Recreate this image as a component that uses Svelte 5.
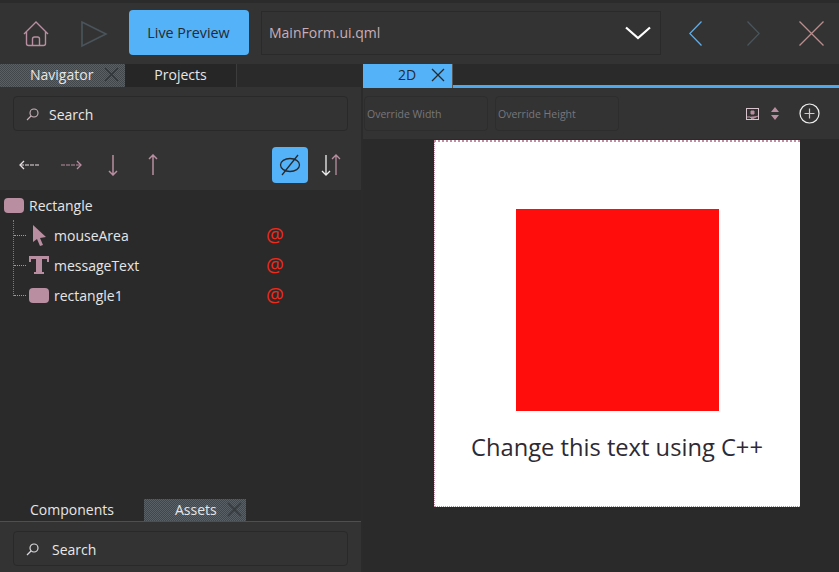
<script>
  const tree = [
    { name: 'mouseArea', icon: 'cursor' },
    { name: 'messageText', icon: 'text' },
    { name: 'rectangle1', icon: 'rect' }
  ];
</script>

<div class="app">
  <header class="toolbar">
    <svg class="home" width="28" height="28" viewBox="0 0 28 28" fill="none" stroke="#b98ea0" stroke-width="1.4">
      <path d="M2 14 14 2l12 12M4.500 12v11.500q0 2 2 2h15q2 0 2-2V12M10.500 25v-6q0-2 2-2h3q2 0 2 2v6" />
    </svg>
    <svg class="play" width="28" height="28" viewBox="0 0 28 28" fill="none" stroke="#4a555c" stroke-width="1.6">
      <path d="M2 2v24L26 14Z" />
    </svg>
    <button class="live">Live Preview</button>
    <div class="file">
      <span>MainForm.ui.qml</span>
      <svg width="26" height="14" viewBox="0 0 26 14" fill="none" stroke="#fff" stroke-width="2.200">
        <path d="M1 1.500 13 12 25 1.500" />
      </svg>
    </div>
    <svg class="nav first" width="13" height="25" viewBox="0 0 13 25" fill="none" stroke="#62aee8" stroke-width="1.300">
      <path d="M12.500 .5 .8 12.500l11.700 12" />
    </svg>
    <svg class="nav second" width="13" height="25" viewBox="0 0 13 25" fill="none" stroke="#4a555c" stroke-width="1.300">
      <path d="m.5 .5 11.700 12L.5 24.500" />
    </svg>
    <svg class="close" width="25" height="25" viewBox="0 0 25 25" fill="none" stroke="#b98e8e" stroke-width="1.300">
      <path d="m.5 .5 24 24M24.500 .5l-24 24" />
    </svg>
  </header>

  <div class="main">
    <aside class="left">
      <div class="tabs top-tabs">
        <div class="tab active nav-tab">
          <span>Navigator</span>
          <svg class="x" width="15" height="15" viewBox="0 0 15 15" stroke="#33383c" stroke-width="1.600"><path d="m1 1 13 13M14 1 1 14" /></svg>
        </div>
        <div class="tab projects"><span>Projects</span></div>
      </div>

      <div class="nav-panel">
        <div class="search">
          <svg width="13" height="13" viewBox="0 0 13 13" fill="none" stroke="#c9b4bd" stroke-width="1.100"><circle cx="8" cy="5" r="4" /><path d="M5 8 1 12" /></svg>
          <span>Search</span>
        </div>
        <div class="actions">
          <svg class="a1" width="21" height="10" viewBox="0 0 21 10" fill="none" stroke="#e8e0e4"><path d="M1 5h20" stroke-dasharray="4 1" /><path d="M5 1 1 5l4 4" stroke-width="1.300" /></svg>
          <svg class="a2" width="21" height="10" viewBox="0 0 21 10" fill="none" stroke="#b98ea0"><path d="M0 5h20" stroke-dasharray="4 1" /><path d="m16 1 4 4-4 4" stroke-width="1.300" /></svg>
          <svg class="a3" width="10" height="22" viewBox="0 0 10 22" fill="none" stroke="#b98ea0" stroke-width="1.500"><path d="M5 1v20M1 17l4 4 4-4" /></svg>
          <svg class="a4" width="10" height="22" viewBox="0 0 10 22" fill="none" stroke="#b98ea0" stroke-width="1.500"><path d="M5 21V1M1 5l4-4 4 4" /></svg>
          <div class="toggle">
            <svg width="24" height="24" viewBox="0 0 24 24" fill="none" stroke="#26292c" stroke-width="1.300"><ellipse cx="12" cy="12" rx="9.500" ry="6.500" /><path d="M4 22 20 2" /></svg>
          </div>
          <svg class="sort" width="20" height="22" viewBox="0 0 20 22" fill="none" stroke-width="1.300">
            <path stroke="#eee" d="M5 1v20M1 17l4 4 4-4" />
            <path stroke="#b98ea0" d="M15 21V1M11 5l4-4 4 4" />
          </svg>
        </div>
      </div>

      <div class="tree">
        <div class="root"><i class="swatch big"></i><span>Rectangle</span></div>
        <div class="children">
          {#each tree as item}
            <div class="row">
              <i class="dash"></i>
              <div class="icon">
                {#if item.icon === 'cursor'}
                  <svg width="15" height="21" viewBox="0 0 15 21" fill="#b98ea0"><path d="M1 0v17l4-3 3 7 3-1-3-7 6-1Z" /></svg>
                {:else if item.icon === 'text'}
                  <svg width="20" height="20" viewBox="0 0 20 20" fill="#b98ea0"><path d="M0 1h20v6h-2V4h-5v13h2v2H5v-2h2V4H2v3H0Z" /></svg>
                {:else}
                  <i class="swatch"></i>
                {/if}
              </div>
              <span class="name">{item.name}</span>
              <span class="at">@</span>
            </div>
          {/each}
        </div>
      </div>

      <div class="tabs bottom-tabs">
        <div class="tab components"><span>Components</span></div>
        <div class="tab active assets-tab">
          <span>Assets</span>
          <svg class="x" width="15" height="15" viewBox="0 0 15 15" stroke="#33383c" stroke-width="1.600"><path d="m1 1 13 13M14 1 1 14" /></svg>
        </div>
      </div>
      <div class="assets-panel">
        <div class="search">
          <svg width="13" height="13" viewBox="0 0 13 13" fill="none" stroke="#d8d8dc" stroke-width="1.200"><circle cx="8" cy="5" r="4" /><path d="M5 8 1 12" /></svg>
          <span>Search</span>
        </div>
      </div>
    </aside>

    <section class="right">
      <div class="doc-tabs">
        <div class="doc-tab">
          <span>2D</span>
          <svg width="14" height="14" viewBox="0 0 14 14" stroke="#26292c" stroke-width="1.300"><path d="m1 1 12 12M13 1 1 13" /></svg>
        </div>
      </div>
      <div class="doc-tools">
        <div class="override first-o">Override Width</div>
        <div class="override">Override Height</div>
        <svg class="snap" width="13" height="12" viewBox="0 0 13 12" fill="none" stroke="#d8c4cc"><rect x="0.500" y="0.500" width="12" height="11" /><path d="M1 9h3l2 2 6-3M5 3h3v3H5Z" fill="#b98ea0" stroke="#b98ea0" /></svg>
        <svg class="updown" width="8" height="13" viewBox="0 0 8 13" fill="#b98ea0"><path d="M4 0 8 5H0ZM0 8h8l-4 5Z" /></svg>
        <svg class="plus" width="21" height="21" viewBox="0 0 21 21" fill="none" stroke="#eee" stroke-width="1.200"><circle cx="10.500" cy="10.500" r="9.500" /><path stroke="#d8c4cc" d="M10.500 5.500v10M5.500 10.500h10" /></svg>
      </div>
      <div class="canvas">
        <div class="artboard">
          <div class="red"></div>
          <div class="message">Change this text using C++</div>
        </div>
      </div>
    </section>
  </div>
</div>

<style>
  :global(body) {
    margin: 0;
    background: #2b2b2b;
  }
  .app {
    width: 839px;
    height: 572px;
    overflow: hidden;
    display: flex;
    flex-direction: column;
    font-family: "Open Sans", "Noto Sans", sans-serif;
    color: #e6e6e6;
    font-size: 14px;
    background: #2b2b2b;
    padding-top: 3px;
    box-sizing: border-box;
  }
  .toolbar {
    height: 61px;
    flex: none;
    background: #333;
    display: flex;
    align-items: center;
    box-sizing: border-box;
  }
  .home { margin-left: 22px; }
  .play { margin-left: 30px; }
  .live {
    margin-left: 21px;
    width: 120px;
    height: 45px;
    border: 0;
    border-radius: 4px;
    background: #54b2f8;
    color: #26292c;
    font: inherit;
    font-size: 14.300px;
    padding: 0 1px 0 0;
    position: relative;
    top: -1px;
  }
  .file {
    margin-left: 12px;
    width: 400px;
    height: 44px;
    border: 1px solid #2a2a2a;
    box-sizing: border-box;
    display: flex;
    align-items: center;
    justify-content: space-between;
    padding: 0 9px 0 7px;
    color: #c9aeb8;
    font-size: 14px;
    position: relative;
    top: -1px;
  }
  .nav.first { margin-left: 28px; }
  .nav.second { margin-left: 45px; }
  .close { margin-left: 39px; }

  .main {
    flex: 1;
    display: flex;
    min-height: 0;
  }
  .left {
    width: 361px;
    flex: none;
    display: flex;
    flex-direction: column;
  }
  .tabs {
    display: flex;
    flex: none;
    background: #2a2a2a;
    box-sizing: border-box;
  }
  .top-tabs { height: 23px; }
  .tab {
    display: flex;
    align-items: center;
    box-sizing: border-box;
    font-size: 14px;
    padding-bottom: 2px;
  }
  .tab.active {
    background: repeating-conic-gradient(#5a6166 0 25%, #41474b 0 50%) 0 0 / 2px 2px;
  }
  .nav-tab { width: 125px; padding-left: 30px; }
  .nav-tab .x { margin-left: 11px; }
  .projects {
    width: 112px;
    justify-content: center;
    background: #262626;
    border-right: 1px solid #3c3c3c;
  }
  .nav-panel {
    height: 103px;
    flex: none;
    background: #333;
    padding: 9px 13px 0;
    box-sizing: border-box;
  }
  .search {
    width: 335px;
    height: 35px;
    box-sizing: border-box;
    border: 1px solid #292929;
    border-radius: 4px;
    display: flex;
    align-items: center;
    padding-left: 12px;
    padding-top: 1px;
    font-size: 14px;
    color: #e8e8e8;
  }
  .search svg { margin-right: 10px; }
  .actions {
    display: flex;
    align-items: center;
    height: 36px;
    margin-top: 16px;
    margin-left: -13px;
  }
  .a1 { margin-left: 19px; }
  .a2 { margin-left: 21px; }
  .a3 { margin-left: 26px; }
  .a4 { margin-left: 30px; }
  .toggle {
    margin-left: 114px;
    width: 36px;
    height: 36px;
    background: #54b2f8;
    border-radius: 4px;
    display: flex;
    align-items: center;
    justify-content: center;
  }
  .sort { margin-left: 13px; }

  .tree {
    flex: 1;
    background: #2a2a2a;
    min-height: 0;
  }
  .root {
    height: 30px;
    display: flex;
    align-items: center;
    padding-left: 4px;
    gap: 5px;
  }
  .swatch {
    display: block;
    width: 20px;
    height: 15px;
    background: #b98ea0;
    border-radius: 4px;
  }
  .children {
    margin-left: 13px;
    border-left: 1px dotted #8a7480;
    height: 76px;
  }
  .row {
    height: 30px;
    display: flex;
    align-items: center;
    position: relative;
  }
  .dash {
    width: 12px;
    border-top: 1px dotted #b98ea0;
    flex: none;
  }
  .icon {
    width: 25px;
    margin-left: 3px;
    display: flex;
    align-items: center;
    justify-content: center;
    padding-right: 5px;
    box-sizing: border-box;
  }
  .name { width: 212px; flex: none; }
  .at {
    color: #f0291a;
    font-size: 20px;
    line-height: 1;
  }
  .bottom-tabs {
    height: 27px;
    padding-top: 4px;
    border-bottom: 1px solid #4a5055;
  }
  .components {
    width: 144px;
    padding-left: 30px;
  }
  .assets-tab {
    width: 102px;
    padding-left: 31px;
  }
  .assets-tab .x { margin-left: 10px; }
  .assets-panel {
    height: 50px;
    flex: none;
    background: #333;
    padding: 9px 13px 0;
    box-sizing: border-box;
  }
  .assets-panel .search svg { margin-right: 13px; }

  .right {
    flex: 1;
    margin-left: 2px;
    display: flex;
    flex-direction: column;
    min-width: 0;
  }
  .doc-tabs {
    height: 24px;
    flex: none;
    box-sizing: border-box;
    border-bottom: 3px solid #4fa8ec;
    background: #2a2a2a;
    display: flex;
  }
  .doc-tab {
    width: 90px;
    background: #54b2f8;
    color: #26292c;
    display: flex;
    align-items: center;
    padding: 0 0 3px 35px;
    box-sizing: border-box;
    font-size: 14px;
    height: 24px;
    border-right: 1px solid #555;
  }
  .doc-tab svg { margin-left: 15px; }
  .doc-tools {
    height: 51px;
    flex: none;
    background: #333;
    display: flex;
    align-items: center;
    padding-left: 1px;
  }
  .override {
    width: 124px;
    height: 35px;
    box-sizing: border-box;
    border: 1px solid #2d2d2d;
    border-radius: 4px;
    display: flex;
    align-items: center;
    padding: 1px 0 0 2px;
    font-size: 10.500px;
    color: #77777c;
    margin-right: 6px;
  }
  .override + .override { margin-left: 1px; }
  .snap { margin-left: 121px; }
  .updown { margin-left: 12px; }
  .plus { margin-left: 20px; }
  .canvas {
    flex: 1;
    min-height: 0;
    background: #2a2a2a;
    padding: 1px 0 0 71px;
  }
  .artboard {
    width: 366px;
    height: 367px;
    background: #fff;
    box-sizing: border-box;
    border-top: 2px dotted #c48aa0;
    border-left: 1px dotted #c48aa0;
    border-bottom: 1px dotted #c48aa0;
    display: flex;
    flex-direction: column;
    align-items: center;
    padding-top: 67px;
  }
  .red {
    width: 203px;
    height: 202px;
    background: #ff0d0d;
  }
  .message {
    margin: 18px 1px 0 0;
    font-size: 23.700px;
    line-height: 36px;
    color: #2e2a33;
    white-space: nowrap;
  }
</style>
